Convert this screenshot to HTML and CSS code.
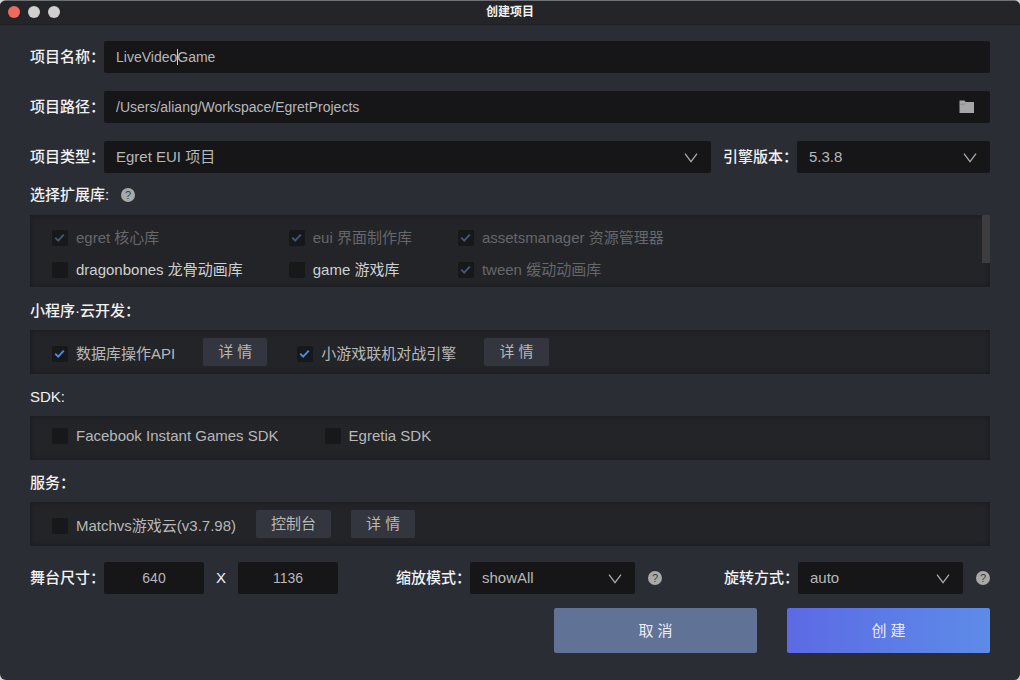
FILE: index.html
```html
<!DOCTYPE html>
<html lang="zh-CN">
<head>
<meta charset="utf-8">
<title>创建项目</title>
<link rel="stylesheet" href="styles.css">
</head>
<body>
<div class="window">
  <header class="titlebar">
    <div class="lights">
      <button class="light light-close" type="button" aria-label="关闭"></button>
      <button class="light" type="button" aria-label="最小化"></button>
      <button class="light" type="button" aria-label="缩放"></button>
    </div>
    <h1 class="title">创建项目</h1>
  </header>

  <form class="form">
    <div class="row">
      <label class="label" for="name">项目名称：</label>
      <div class="field">
        <input class="input" id="name" type="text" value="LiveVideoGame">
        <span class="caret"></span>
      </div>
    </div>
    <div class="row">
      <label class="label" for="path">项目路径：</label>
      <div class="field">
        <input class="input" id="path" type="text" value="/Users/aliang/Workspace/EgretProjects">
        <button class="browse" type="button" aria-label="浏览">
          <svg width="16" height="14" viewBox="0 0 16 14"><path d="M.5.5h5l1.2 1.4h8.3v11.2H.5z" fill="#a6a6a6"/><path d="M.5 4.3h4.8l1.6-1.6" fill="none" stroke="#858585" stroke-width=".7"/></svg>
        </button>
      </div>
    </div>
    <div class="row">
      <label class="label" for="type">项目类型：</label>
      <div class="field">
        <select class="select" id="type"><option>Egret EUI 项目</option></select>
        <svg class="chevron" width="14" height="10" viewBox="0 0 14 10"><path d="M1 .7l6 8 6-8"/></svg>
      </div>
      <label class="label label-next" for="version">引擎版本：</label>
      <div class="field field-version">
        <select class="select" id="version"><option>5.3.8</option></select>
        <svg class="chevron" width="14" height="10" viewBox="0 0 14 10"><path d="M1 .7l6 8 6-8"/></svg>
      </div>
    </div>

    <section class="section section-libs">
      <h2 class="heading">选择扩展库:
        <button class="help" type="button" aria-label="扩展库帮助">?</button>
      </h2>
      <div class="panel panel-libs">
        <label class="choice"><input class="check" type="checkbox" checked disabled><span>egret 核心库</span></label>
        <label class="choice"><input class="check" type="checkbox" checked disabled><span>eui 界面制作库</span></label>
        <label class="choice"><input class="check" type="checkbox" checked disabled><span>assetsmanager 资源管理器</span></label>
        <label class="choice choice-bright"><input class="check" type="checkbox"><span>dragonbones 龙骨动画库</span></label>
        <label class="choice choice-bright"><input class="check" type="checkbox"><span>game 游戏库</span></label>
        <label class="choice"><input class="check" type="checkbox" checked disabled><span>tween 缓动动画库</span></label>
        <span class="thumb"></span>
      </div>
    </section>

    <section class="section">
      <h2 class="heading">小程序·云开发：</h2>
      <div class="panel panel-cloud">
        <div class="pair">
          <label class="choice"><input class="check" type="checkbox" checked><span>数据库操作API</span></label>
          <button class="small" type="button">详 情</button>
        </div>
        <div class="pair">
          <label class="choice"><input class="check" type="checkbox" checked><span>小游戏联机对战引擎</span></label>
          <button class="small" type="button">详 情</button>
        </div>
      </div>
    </section>

    <section class="section">
      <h2 class="heading">SDK:</h2>
      <div class="panel panel-sdk">
        <label class="choice"><input class="check" type="checkbox"><span>Facebook Instant Games SDK</span></label>
        <label class="choice"><input class="check" type="checkbox"><span>Egretia SDK</span></label>
      </div>
    </section>

    <section class="section">
      <h2 class="heading">服务：</h2>
      <div class="panel panel-service">
        <label class="choice"><input class="check" type="checkbox"><span>Matchvs游戏云(v3.7.98)</span></label>
        <button class="small" type="button">控制台</button>
        <button class="small" type="button">详 情</button>
      </div>
    </section>

    <div class="stage">
      <div class="group">
        <label class="label" for="width">舞台尺寸：</label>
        <input class="input input-size" id="width" type="text" value="640">
        <span class="times">X</span>
        <input class="input input-size" type="text" value="1136" aria-label="高度">
      </div>
      <div class="group">
        <label class="label" for="scale">缩放模式：</label>
        <div class="field field-mode">
          <select class="select" id="scale"><option>showAll</option></select>
          <svg class="chevron" width="14" height="10" viewBox="0 0 14 10"><path d="M1 .7l6 8 6-8"/></svg>
        </div>
        <button class="help" type="button" aria-label="缩放模式帮助">?</button>
      </div>
      <div class="group">
        <label class="label" for="rotate">旋转方式：</label>
        <div class="field field-mode">
          <select class="select" id="rotate"><option>auto</option></select>
          <svg class="chevron" width="14" height="10" viewBox="0 0 14 10"><path d="M1 .7l6 8 6-8"/></svg>
        </div>
        <button class="help" type="button" aria-label="旋转方式帮助">?</button>
      </div>
    </div>

    <div class="actions">
      <button class="action action-cancel" type="button">取 消</button>
      <button class="action action-create" type="submit">创 建</button>
    </div>
  </form>
</div>
</body>
</html>
```
FILE: styles.css
```css
* {
  box-sizing: border-box;
}

body {
  margin: 0;
  background: #d4d6d6;
}

button,
input,
select {
  margin: 0;
  border: 0;
  font: inherit;
}

.window {
  min-height: 100vh;
  background: #2b2d35;
  border-top: 1px solid #6d7173;
  border-radius: 6px;
  overflow: hidden;
  color: #f2f2f2;
  font: 15px/20px "Liberation Sans", "Noto Sans CJK SC", sans-serif;
}

.titlebar {
  display: grid;
  grid-template-columns: 1fr auto 1fr;
  align-items: center;
  height: 24px;
  padding: 0 8px 2px;
  background: #242528;
  border-bottom: 1px solid #1e1f22;
}

.lights {
  display: flex;
  gap: 8px;
}

.light {
  width: 12px;
  height: 12px;
  padding: 0;
  border-radius: 50%;
  background: #d0d0d0;
}

.light-close {
  background: #ee6a5f;
}

.title {
  margin: 0;
  font-size: 12px;
  font-weight: 700;
  line-height: 20px;
}

.form {
  padding: 16px 30px 27px;
}

.row {
  display: flex;
  align-items: center;
  margin-bottom: 18px;
}

.label {
  flex: none;
  width: 74px;
  font-weight: 500;
  white-space: nowrap;
}

.label-next {
  margin-left: 12px;
}

.field {
  position: relative;
  flex: 1;
  min-width: 0;
}

.field-version {
  flex: 0 0 193px;
}

.field-mode {
  flex: 0 0 165px;
}

.input,
.select {
  display: block;
  width: 100%;
  height: 32px;
  padding: 0 12px;
  border-radius: 2px;
  background: #161618;
  color: #b8b8b8;
}

.input {
  font-size: 14px;
}

.select {
  appearance: none;
}

.input-size {
  width: 100px;
  text-align: center;
}

.caret {
  position: absolute;
  top: 8px;
  left: 73px;
  width: 1px;
  height: 16px;
  background: #c8c8c8;
}

.browse {
  position: absolute;
  top: 8px;
  right: 15px;
  display: flex;
  padding: 1px 0;
  background: none;
}

.chevron {
  position: absolute;
  top: 12px;
  right: 13px;
  fill: none;
  stroke: #a8a8a8;
  stroke-width: 1.3;
  pointer-events: none;
}

.section {
  margin-bottom: 13px;
}

.section-libs {
  margin-top: -6px;
  margin-bottom: 14px;
}

.heading {
  display: flex;
  align-items: center;
  gap: 12px;
  margin: 0 0 9px;
  font-size: 15px;
  font-weight: 500;
  line-height: 20px;
}

.section-libs .heading {
  margin-bottom: 10px;
}

.help {
  width: 14px;
  height: 14px;
  padding: 0;
  border-radius: 50%;
  background: #a9a9a9;
  color: #3c3e44;
  font-size: 11px;
  line-height: 14px;
  text-align: center;
}

.panel {
  position: relative;
  display: flex;
  align-items: flex-start;
  min-height: 44px;
  padding: 8px 22px;
  background: #232428;
  box-shadow: inset 0 0 6px rgba(0, 0, 0, .3);
}

.panel-libs {
  display: grid;
  grid-template-columns: repeat(3, max-content);
  column-gap: 46px;
  padding: 7px 22px 1px;
}

.panel-cloud {
  gap: 30px;
  padding-bottom: 4px;
}

.panel-sdk {
  gap: 46px;
  padding-top: 4px;
}

.panel-service {
  gap: 20px;
  padding-bottom: 4px;
}

.pair {
  display: flex;
  align-items: flex-start;
  gap: 28px;
}

.thumb {
  position: absolute;
  top: 0;
  right: 0;
  width: 8px;
  height: 48px;
  background: #3d3d3f;
}

.choice {
  display: flex;
  align-items: center;
  gap: 8px;
  height: 32px;
  color: #b8b8b8;
  white-space: nowrap;
}

.choice-bright {
  color: #d0d0d0;
}

.choice:has(:disabled) {
  color: #66676a;
}

.check {
  appearance: none;
  flex: none;
  width: 16px;
  height: 16px;
  border-radius: 2px;
  background: #17181a center / 16px 16px no-repeat;
}

.check:checked {
  background-image: url("data:image/svg+xml,%3Csvg xmlns='http://www.w3.org/2000/svg' viewBox='0 0 16 16'%3E%3Cpath d='M3.2 7.6l3 3 5.6-6' fill='none' stroke='%23478be0' stroke-width='2'/%3E%3C/svg%3E");
}

.check:disabled {
  background-image: url("data:image/svg+xml,%3Csvg xmlns='http://www.w3.org/2000/svg' viewBox='0 0 16 16'%3E%3Cpath d='M3.2 7.6l3 3 5.6-6' fill='none' stroke='%23415676' stroke-width='2'/%3E%3C/svg%3E");
}

.small {
  height: 28px;
  padding: 0 15px;
  border-radius: 2px;
  background: #33363e;
  color: #b8b8b8;
}

.stage {
  display: grid;
  grid-template-columns: 366fr 328fr 266px;
  margin-top: 16px;
}

.group {
  display: flex;
  align-items: center;
}

.group .help {
  margin-left: 13px;
}

.times {
  width: 34px;
  text-align: center;
}

.actions {
  display: flex;
  justify-content: flex-end;
  gap: 30px;
  margin-top: 14px;
}

.action {
  width: 203px;
  height: 45px;
  border-radius: 2px;
  color: #ececf2;
}

.action-cancel {
  background: #607296;
}

.action-create {
  background: linear-gradient(90deg, #5c6ae4, #5d8be8);
}
```
